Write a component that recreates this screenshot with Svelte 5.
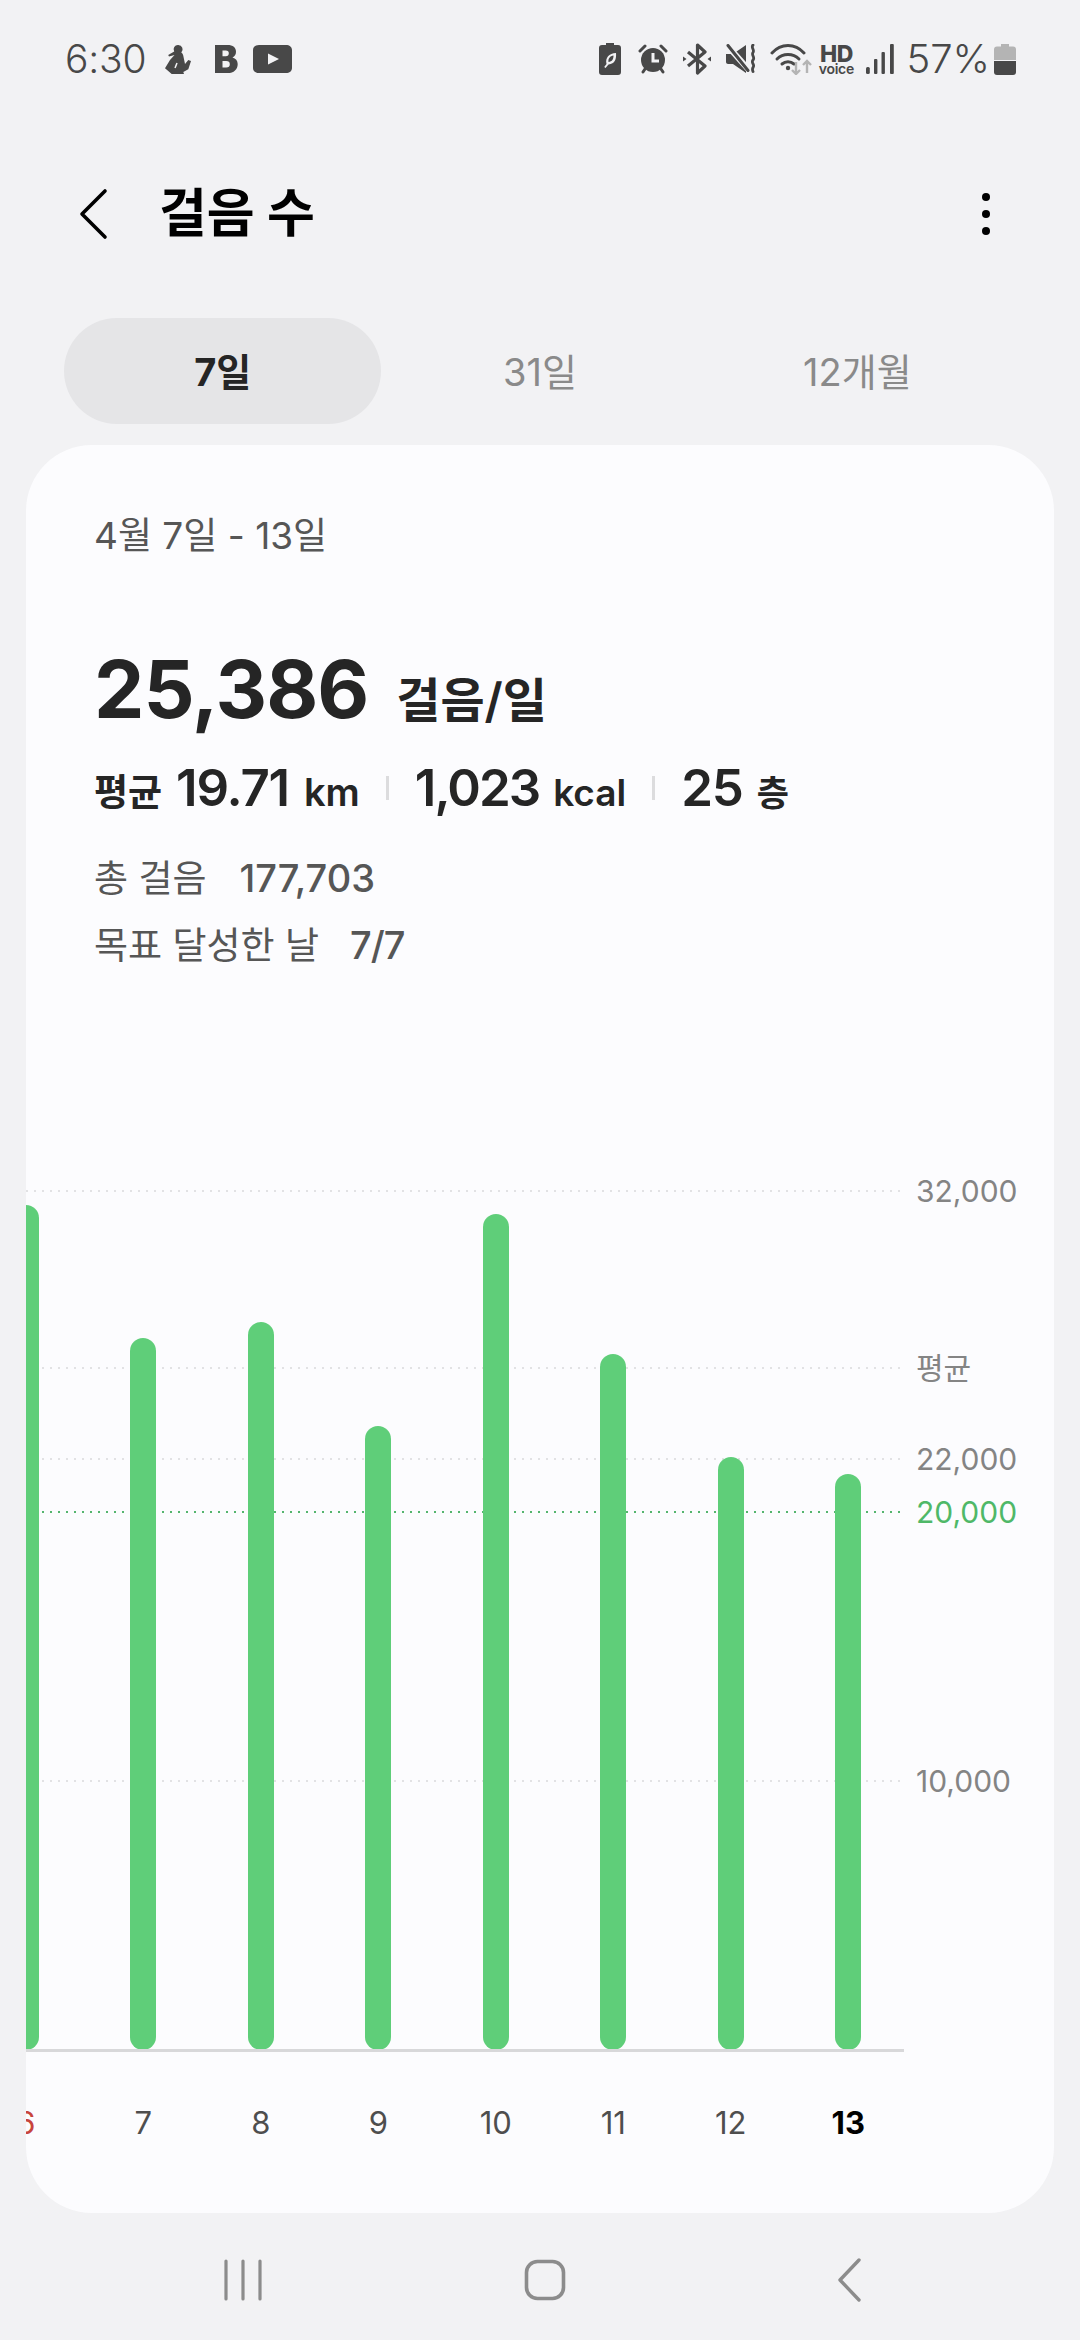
<script>
  const days = [
    { label: '6', top: 1205, cls: 'red' },
    { label: '7', top: 1338, cls: '' },
    { label: '8', top: 1322, cls: '' },
    { label: '9', top: 1426, cls: '' },
    { label: '10', top: 1214, cls: '' },
    { label: '11', top: 1354, cls: '' },
    { label: '12', top: 1457, cls: '' },
    { label: '13', top: 1474, cls: 'today' }
  ];
  const base = 2051;
  const lines = [
    { label: '32,000', y: 1192, cls: '' },
    { label: '평균', y: 1369, cls: '' },
    { label: '22,000', y: 1460, cls: '' },
    { label: '20,000', y: 1513, cls: 'goal' },
    { label: '10,000', y: 1782, cls: '' }
  ];
</script>

<div class="page">
  <div class="status">
    <span class="time">6:30</span>
    <svg class="i run" width="26" height="30" viewBox="0 0 26 30"><path fill="#484848" d="M13.300 1a4.300 4.300 0 0 1 3 7.400c1.300.8 2 2.300 2.200 4.300l1.500 7.300 3.300-4 2.700 1-2.700 8.300-5 2.700.7 2H6.700L0 24.300 5 16l4.500-5-5.500 1.500-.8-1.500 6-3.500A4.300 4.300 0 0 1 13.300 1z"/><path d="M12 19l-2 5" stroke="#f2f2f4" stroke-width="1.500" fill="none"/></svg>
    <svg class="i b" width="23" height="28" viewBox="0 0 23 28"><path fill="#484848" fill-rule="evenodd" d="M0 0h12.500c5.500 0 8.500 2.500 8.500 6.800 0 2.700-1.300 4.600-3.500 5.600 3.200.9 5.200 3.100 5.200 6.500 0 5.500-3.800 9.100-10 9.100H0zM7.500 5.500v5.700h3.300c2 0 3-1 3-2.900 0-1.800-1-2.800-3-2.800zM7.500 16v6.500h3.800c2.300 0 3.500-1.200 3.500-3.300 0-2.100-1.200-3.200-3.500-3.200z"/></svg>
    <svg class="i yt" width="39" height="28" viewBox="0 0 39 28"><path fill="#484848" fill-rule="evenodd" d="M6 0h27c3.500 0 6 2 6 5v18c0 3-2.500 5-6 5H6c-3.500 0-6-2-6-5V5c0-3 2.500-5 6-5zM15 8.500v11L26 14z"/></svg>
    <span class="spacer"></span>
    <svg class="i" width="22" height="32" viewBox="0 0 22 32"><path fill="#484848" d="M7 0h8v2h4c2 0 3 1 3 3v24c0 2-1 3-3 3H3c-2 0-3-1-3-3V5c0-2 1-3 3-3h4z"/><path fill="#f2f2f4" d="M17 10c.5 6-1 11-7.500 11.500L6.500 25l-1.300-1 2.300-3C6 15 10 10 17 10zm-2.500 2.500c-3.500.5-5.500 3-5 6.500 3.800-.3 5-3 5-6.500z"/></svg>
    <svg class="i m17" width="30" height="30" viewBox="0 0 30 30"><g stroke="#484848" stroke-width="3" stroke-linecap="round" fill="none"><path d="M2 7l5-5M28 7l-5-5M7 25l-2 3M23 25l2 3"/></g><circle cx="15" cy="16" r="12" fill="#484848"/><path d="M15 9v8h6" fill="none" stroke="#f2f2f4" stroke-width="3"/></svg>
    <svg class="i m15" width="28" height="32" viewBox="0 0 28 32"><path fill="none" stroke="#484848" stroke-width="3.200" stroke-linejoin="round" d="M5 9l17 14-7.500 7V2L22 9 5 23"/><path fill="#484848" d="M0 13.500l3.500 2.500L0 18.500zM28 13.500l-3.500 2.500 3.500 2.500z"/></svg>
    <svg class="i m15" width="30" height="30" viewBox="0 0 30 30"><path fill="#484848" d="M0 10h7L20 1v28L7 20H2c-1 0-2-1-2-2z"/><path fill="none" stroke="#f2f2f4" stroke-width="6" d="M-1-1l24 27"/><path fill="none" stroke="#484848" stroke-width="3" stroke-linecap="round" d="M2 1.500l20 25"/><path fill="none" stroke="#484848" stroke-width="2.800" stroke-linecap="round" d="M27 1c-2.500 3 2 4.500 0 7.500s2.500 4.500 0 7.500 2.500 4.500 0 7.500c-1 2-.5 3 0 4"/></svg>
    <svg class="i m14" width="42" height="32" viewBox="0 0 42 32"><g fill="none" stroke="#484848" stroke-width="3" stroke-linecap="round"><path d="M2 10C11 0 25 0 34 10"/><path d="M7 16c6-6 16-6 22 0"/><path d="M12 21c3.500-3 8.500-3 12 0"/></g><circle cx="18" cy="25" r="2.200" fill="#484848"/><g fill="none" stroke="#b4b4b4" stroke-width="2.400"><path d="M26 19v12M22 27l4 4 4-4"/><path d="M37 30V18M33 22l4-4 4 4"/></g></svg>
    <div class="hd"><b>HD</b><small>voice</small></div>
    <svg class="i m12" width="28" height="30" viewBox="0 0 28 30"><g fill="#484848"><rect x="0" y="23" width="3.800" height="7" rx="1.500"/><rect x="8" y="15" width="3.400" height="15" rx="1"/><rect x="15.500" y="8" width="3.400" height="22" rx="1"/><rect x="24" y="0" width="3.800" height="30" rx="1"/></g></svg>
    <span class="pct">57%</span>
    <svg class="i batt" width="22" height="31" viewBox="0 0 22 31"><path fill="#b4b4b4" d="M7 0h8v2.500h4c2 0 3 1 3 3V16H0V5.500c0-2 1-3 3-3h4z"/><path fill="#484848" d="M0 17h22v11c0 2-1 3-3 3H3c-2 0-3-1-3-3z"/></svg>
  </div>

  <div class="head">
    <svg width="30" height="52" viewBox="0 0 30 52"><path d="M27 3L4 26l23 23" fill="none" stroke="#000" stroke-width="3.600" stroke-linecap="round" stroke-linejoin="round"/></svg>
    <h1>걸음 수</h1>
    <div class="dots"><i></i><i></i><i></i></div>
  </div>

  <div class="tabs">
    <div class="tab on">7일</div>
    <div class="tab">31일</div>
    <div class="tab">12개월</div>
  </div>

  <div class="card">
    <div class="date">4월 7일 - 13일</div>
    <div class="big"><span class="num">25,386</span><span class="unit">걸음/일</span></div>
    <div class="stats">
      <span class="avg">평균</span><span class="v">19.71</span><span class="u km">km</span><i class="sep"></i><span class="v tight">1,023</span><span class="u">kcal</span><i class="sep"></i><span class="v">25</span><span class="u k">층</span>
    </div>
    <div class="row first">총 걸음<b>177,703</b></div>
    <div class="row second">목표 달성한 날<b>7/7</b></div>

    <div class="chart">
      {#each lines as l}
        <div class="line {l.cls}" style="bottom:{base - l.y}px"><em></em><span>{l.label}</span></div>
      {/each}
      <div class="bars">
        {#each days as d}
          <div class="col"><div class="bar" style="height:{base - d.top - 1}px"></div></div>
        {/each}
      </div>
    </div>
    <div class="labels">
      {#each days as d}
        <div class="lab {d.cls}">{d.label}</div>
      {/each}
    </div>
  </div>

  <div class="nav">
    <svg width="38" height="42" viewBox="0 0 38 42"><g stroke="#8c8c8c" stroke-width="3.200" stroke-linecap="round"><path d="M2 2v38M19 2v38M36 2v38"/></g></svg>
    <svg width="42" height="42" viewBox="0 0 42 42"><rect x="2.500" y="2.500" width="37" height="37" rx="11" fill="none" stroke="#8c8c8c" stroke-width="3.600"/></svg>
    <svg class="navback" width="24" height="44" viewBox="0 0 24 44"><path d="M22 2L3 22l19 20" fill="none" stroke="#8c8c8c" stroke-width="3.400" stroke-linecap="round" stroke-linejoin="round"/></svg>
  </div>
</div>

<style>
  :global(body) { margin: 0; background: #f2f2f4; }
  .page {
    width: 1080px; height: 2340px; background: #f2f2f4; overflow: hidden;
    font-family: Inter, "Noto Sans CJK KR", sans-serif; color: #252525;
  }
  .status { height: 118px; padding: 0 64px 0 65px; display: flex; align-items: center; box-sizing: border-box; color: #484848; }
  .i { flex: none; display: block; }
  .run { margin-left: 20px; }
  .b { margin-left: 24px; }
  .yt { margin-left: 15px; }
  .m17 { margin-left: 17px; }
  .m15 { margin-left: 15px; }
  .m14 { margin-left: 14px; }
  .m12 { margin-left: 13px; }
  .batt { margin-left: 4px; }
  .spacer { flex: 1; }
  .time { font-size: 39px; font-weight: 300; width: 80px; letter-spacing: -.2px; line-height: 48px; }
  .pct { font-size: 40px; font-weight: 300; margin-left: 12px; letter-spacing: 0; line-height: 48px; }
  .hd { display: flex; flex-direction: column; align-items: center; width: 34px; margin-left: 7px; color: #484848; }
  .hd b { font-size: 23px; font-weight: 800; line-height: 18px; height: 18px; letter-spacing: -.5px; }
  .hd small { font-size: 14px; font-weight: 600; line-height: 11px; height: 11px; letter-spacing: -.3px; }
  .head { height: 120px; margin-top: 36px; display: flex; align-items: center; padding: 0 90px 0 78px; }
  h1 { flex: 1; margin: 0 0 0 51px; font-size: 52px; font-weight: 700; color: #000; line-height: 1; }
  .dots { display: flex; flex-direction: column; gap: 9px; }
  .dots i { display: block; width: 8px; height: 8px; border-radius: 50%; background: #000; }
  .tabs { margin: 44px 64px 0; display: grid; grid-template-columns: repeat(3, 1fr); height: 106px; }
  .tab { display: flex; align-items: center; justify-content: center; font-size: 38px; color: #8a8a8a; border-radius: 53px; box-sizing: border-box; padding-bottom: 4px; }
  .tab.on { background: #e5e5e7; color: #252525; font-weight: 700; }
  .card {
    margin: 21px 26px 0; height: 1768px; background: #fcfcfe; border-radius: 66px; overflow: hidden;
    box-sizing: border-box; padding-top: 69px;
  }
  .date { margin-left: 68px; font-size: 37px; line-height: 44px; color: #565656; }
  .big { margin: 85px 0 0 68px; display: flex; align-items: baseline; height: 92px; }
  .num { font-size: 80px; font-weight: 700; line-height: 92px; letter-spacing: -1px; color: #252525; }
  .unit { margin-left: 28px; font-size: 48px; font-weight: 600; }
  .stats { margin: 23px 0 0 68px; display: flex; align-items: baseline; height: 60px; }
  .avg { font-size: 37px; font-weight: 700; margin-right: 14px; }
  .v { font-size: 51px; font-weight: 600; line-height: 60px; letter-spacing: -1.200px; }
  .v.tight { letter-spacing: -2px; }
  .u { font-size: 37px; font-weight: 600; margin-left: 14px; }
  .u.km { font-size: 38px; margin-left: 15px; }
  .k { font-size: 35px; }
  .sep { display: block; width: 3px; height: 24px; background: #dcdcde; margin: 0 26px; align-self: center; }
  .row { margin-left: 68px; font-size: 37px; line-height: 46px; color: #565656; }
  .row b { font-weight: 500; font-size: 38px; margin-left: 33px; }
  .row.first { margin-top: 37px; }
  .row.second { margin-top: 20px; }
  .row.second b { margin-left: 31px; letter-spacing: -1px; }
  .chart { position: relative; height: 1051px; margin-top: 30px; }
  .chart::after { content: ""; position: absolute; left: 0; right: 150px; bottom: -2px; height: 3px; background: #d8d8da; }
  .line { position: absolute; left: 0; right: 0; height: 0; }
  .line em { position: absolute; left: 0; width: 876px; top: -1px; height: 2px; background: repeating-linear-gradient(90deg, #e2e2e4 0 2px, transparent 2px 8px); }
  .line span { position: absolute; left: 890px; top: -20px; font-size: 30px; line-height: 40px; color: #848484; }
  .line.goal em { background: repeating-linear-gradient(90deg, #55b56e 0 2px, transparent 2px 8px); }
  .line.goal span { color: #4fb868; }
  .bars { position: absolute; left: -59px; bottom: 0; display: flex; align-items: flex-end; height: 100%; }
  .col { width: 117.500px; display: flex; justify-content: center; }
  .bar { width: 26px; background: #5fce79; border-radius: 13px; }
  .labels { display: flex; margin-left: -59px; margin-top: 55px; }
  .lab { width: 117.500px; text-align: center; font-size: 31px; line-height: 36px; color: #4e4e4e; }
  .lab.red { color: #c8443c; }
  .lab.today { color: #000; font-weight: 700; }
  .nav { height: 127px; display: grid; grid-template-columns: repeat(3, 302px); padding: 6px 0 0 92px; box-sizing: border-box; align-items: center; justify-items: center; }
  .navback { transform: translateX(2px); }
</style>
